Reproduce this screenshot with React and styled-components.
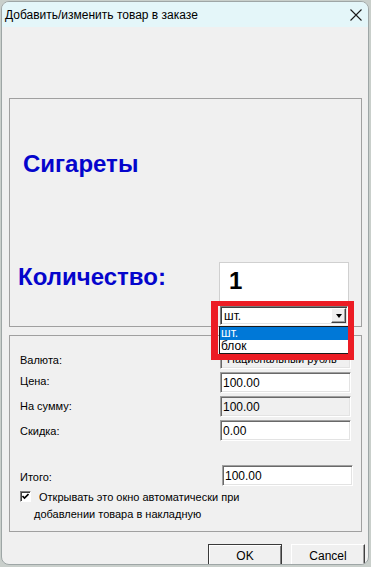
import { Fragment } from 'react';
import styled, { createGlobalStyle } from 'styled-components';

const GlobalStyle = createGlobalStyle`
  html, body {
    margin: 0;
    padding: 0;
    background: #c9cfcb;
    overflow: hidden;
  }
  body {
    font-family: "Liberation Sans", Arial, sans-serif;
    font-size: 11px;
    color: #000;
  }
`;

const Screen = styled.div`
  width: 371px;
  height: 567px;
  padding: 1px 0 0 1px;
  box-sizing: border-box;
`;

const Window = styled.div`
  width: 368px;
  height: 564px;
  box-sizing: border-box;
  border: 1px solid #9ea6a6;
  border-radius: 8px;
  background: #f0f0f0;
  overflow: hidden;
  display: flex;
  flex-direction: column;
`;

const TitleBar = styled.div`
  height: 25px;
  flex: none;
  background: #e4f6f9;
  display: flex;
  align-items: center;
  justify-content: space-between;
  padding: 0 6px 0 3px;
  font-size: 12px;
  color: #000;
`;

const CloseIcon = () => (
  <svg width="12" height="12" viewBox="0 0 12 12">
    <path d="M0.5 0.5 L11.5 11.5 M11.5 0.5 L0.5 11.5" stroke="#1a1a1a" strokeWidth="1.1" fill="none" />
  </svg>
);

const Body = styled.div`
  flex: 1;
  padding: 71px 6px 0 7px;
  display: flex;
  flex-direction: column;
`;

const Panel = styled.div`
  box-sizing: border-box;
  border: 1px solid #a0a0a0;
  margin-top: ${(p) => p.$gap || 0}px;
`;

const TopPanel = styled(Panel)`
  height: 229px;
  padding: 51px 12px 0 13px;
`;

const ProductName = styled.div`
  font-weight: bold;
  font-size: 24px;
  line-height: 28px;
  color: #0505cc;
`;

const QtyRow = styled.div`
  display: flex;
  justify-content: space-between;
  align-items: flex-start;
  margin-top: 84px;
  margin-left: -5px;
`;

const QtyLabel = styled.div`
  font-weight: bold;
  font-size: 24px;
  line-height: 28px;
  color: #0505cc;
  margin-top: 1px;
`;

const QtyColumn = styled.div`
  width: 130px;
  display: flex;
  flex-direction: column;
`;

const QtyBox = styled.div`
  height: 41px;
  box-sizing: border-box;
  background: #fff;
  border: 1px solid #d0d0d0;
  padding: 4px 0 0 9px;
  font-weight: bold;
  font-size: 24px;
  line-height: 28px;
  color: #000;
`;

const ComboWrap = styled.div`
  position: relative;
  margin: 3px 1px 0 1px;
`;

const Combo = styled.div`
  height: 19px;
  box-sizing: border-box;
  background: #fff;
  border-style: solid;
  border-width: 1px;
  border-color: #7a7a7a #ffffff #ffffff #7a7a7a;
  box-shadow: inset 1px 1px 0 #404040, inset -1px -1px 0 #e3e3e3;
  display: flex;
  align-items: center;
  justify-content: space-between;
  padding: 0 1px 0 3px;
  font-size: 12px;
`;

const DropButton = styled.div`
  width: 15px;
  height: 15px;
  box-sizing: border-box;
  background: #f0f0f0;
  border-style: solid;
  border-width: 1px;
  border-color: #ffffff #404040 #404040 #ffffff;
  box-shadow: inset -1px -1px 0 #a0a0a0;
  display: flex;
  align-items: center;
  justify-content: center;
`;

const Arrow = styled.span`
  width: 0;
  height: 0;
  border-left: 3.5px solid transparent;
  border-right: 3.5px solid transparent;
  border-top: 4px solid #000;
  margin-top: 1px;
`;

const DropList = styled.div`
  position: absolute;
  top: 100%;
  left: -1px;
  width: 130px;
  box-sizing: border-box;
  margin-top: 1px;
  background: #fff;
  border: 1px solid #1a1a1a;
  z-index: 3;
`;

const ListItem = styled.div`
  height: 13px;
  line-height: 13px;
  padding-left: 1px;
  font-size: 12px;
  background: ${(p) => (p.$selected ? '#0078d7' : '#fff')};
  color: ${(p) => (p.$selected ? '#fff' : '#000')};
`;

const Highlight = styled.div`
  position: absolute;
  left: -9px;
  top: -5px;
  width: 143px;
  height: 59px;
  box-sizing: border-box;
  border: 6px solid #ec1c24;
  border-left-width: 7px;
  border-top-width: 5px;
  z-index: 4;
  pointer-events: none;
`;

const BottomPanel = styled(Panel)`
  padding: 12px 10px 8px 10px;
  display: flex;
  flex-direction: column;
`;

const FieldGrid = styled.div`
  display: grid;
  grid-template-columns: 1fr 131px;
  row-gap: 3px;
  margin-top: ${(p) => p.$gap || 0}px;
  margin-right: ${(p) => p.$shift || 0}px;
`;

const Label = styled.div`
  padding-top: ${(p) => p.$top || 4}px;
  line-height: 13px;
  font-size: 11px;
`;

const Field = styled.div`
  height: 21px;
  box-sizing: border-box;
  background: ${(p) => (p.$readOnly ? '#f0f0f0' : '#fff')};
  border-style: solid;
  border-width: 1px;
  border-color: #a0a0a0 #ffffff #ffffff #a0a0a0;
  box-shadow: inset 1px 1px 0 #696969, inset -1px -1px 0 #e3e3e3;
  padding: 0 3px 0 2px;
  display: flex;
  align-items: center;
  font-size: 12px;
`;

const CurrencyText = styled.span`
  padding-left: 4px;
  font-size: 11px;
`;

const CheckRow = styled.div`
  display: flex;
  align-items: flex-start;
  margin-top: 3px;
`;

const CheckBox = styled.div`
  width: 11px;
  height: 11px;
  flex: none;
  box-sizing: border-box;
  margin-top: 2px;
  background: #fff;
  border-style: solid;
  border-width: 1px;
  border-color: #808080 #ffffff #ffffff #808080;
  box-shadow: inset 1px 1px 0 #404040;
  display: flex;
  align-items: center;
  justify-content: center;
`;

const CheckText = styled.div`
  width: 215px;
  margin-left: 3px;
  line-height: 17px;
  text-indent: 5px;
  font-size: 11px;
`;

const ButtonBar = styled.div`
  display: flex;
  justify-content: flex-end;
  gap: 9px;
  margin-top: 12px;
  margin-right: -3px;
`;

const Button = styled.button`
  width: 74px;
  height: 23px;
  box-sizing: border-box;
  font-family: "Liberation Sans", Arial, sans-serif;
  font-size: 12px;
  color: #000;
  background: #f0f0f0;
  border-style: solid;
  border-width: 1px;
  border-color: ${(p) => (p.$default ? '#3a3a3a' : '#ffffff #404040 #404040 #ffffff')};
  box-shadow: ${(p) =>
    p.$default ? 'inset 1px 1px 0 #fff, inset -1px -1px 0 #808080' : 'inset -1px -1px 0 #a0a0a0'};
  padding: 0;
`;

const App = () => {
  const fields = [
    { label: 'Цена:', value: '100.00', top: 3 },
    { label: 'На сумму:', value: '100.00', readOnly: true, top: 4 },
    { label: 'Скидка:', value: '0.00', top: 5 },
  ];

  return (
    <>
      <GlobalStyle />
      <Screen>
        <Window>
          <TitleBar>
            <span>Добавить/изменить товар в заказе</span>
            <CloseIcon />
          </TitleBar>
          <Body>
            <TopPanel>
              <ProductName>Сигареты</ProductName>
              <QtyRow>
                <QtyLabel>Количество:</QtyLabel>
                <QtyColumn>
                  <QtyBox>1</QtyBox>
                  <ComboWrap>
                    <Combo>
                      <span>шт.</span>
                      <DropButton>
                        <Arrow />
                      </DropButton>
                    </Combo>
                    <DropList>
                      <ListItem $selected>шт.</ListItem>
                      <ListItem>блок</ListItem>
                    </DropList>
                    <Highlight />
                  </ComboWrap>
                </QtyColumn>
              </QtyRow>
            </TopPanel>

            <BottomPanel $gap={8}>
              <FieldGrid>
                <Label $top={6}>Валюта:</Label>
                <Field $readOnly>
                  <CurrencyText>Национальный рубль</CurrencyText>
                </Field>
                {fields.map((f) => (
                  <Fragment key={f.label}>
                    <Label $top={f.top}>{f.label}</Label>
                    <Field $readOnly={f.readOnly}>{f.value}</Field>
                  </Fragment>
                ))}
              </FieldGrid>
              <FieldGrid $gap={24} $shift={-2}>
                <Label $top={6}>Итого:</Label>
                <Field>100.00</Field>
              </FieldGrid>
              <CheckRow>
                <CheckBox>
                  <svg width="7" height="7" viewBox="0 0 7 7">
                    <path d="M0.5 3 L2.5 5 L6.5 1" stroke="#000" strokeWidth="1.6" fill="none" />
                  </svg>
                </CheckBox>
                <CheckText>
                  Открывать это окно автоматически при добавлении товара в накладную
                </CheckText>
              </CheckRow>
            </BottomPanel>

            <ButtonBar>
              <Button $default>OK</Button>
              <Button>Cancel</Button>
            </ButtonBar>
          </Body>
        </Window>
      </Screen>
    </>
  );
};

export default App;
